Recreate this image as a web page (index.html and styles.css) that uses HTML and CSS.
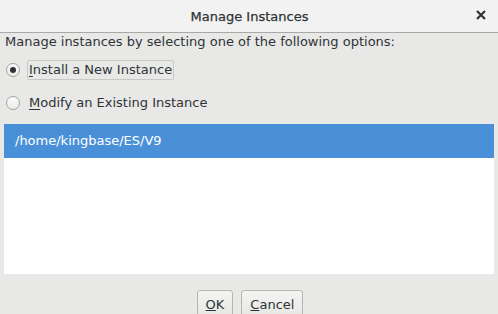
FILE: index.html
```html
<!DOCTYPE html>
<html lang="en">
<head>
  <meta charset="UTF-8" />
  <title>Manage Instances</title>
  <link rel="stylesheet" href="styles.css">
</head>
<body>
  <div class="titlebar">
    <span class="title">Manage Instances</span>
    <span class="close">
      <svg width="10" height="10" viewBox="0 0 10 10"><path d="M1 1 L9 9 M9 1 L1 9" stroke="#2e3436" stroke-width="2.2"/></svg>
    </span>
  </div>

  <div class="content">
    <div class="intro">Manage instances by selecting one of the following options:</div>

    <div class="option">
      <span class="radio checked"></span>
      <span class="label focused"><u>I</u>nstall a New Instance</span>
    </div>
    <div class="option">
      <span class="radio"></span>
      <span class="label"><u>M</u>odify an Existing Instance</span>
    </div>

    <div class="list">
      <div class="row selected">/home/kingbase/ES/V9</div>
    </div>

    <div class="buttons">
      <button class="btn"><u>O</u>K</button>
      <button class="btn"><u>C</u>ancel</button>
    </div>
  </div>
</body>
</html>
```

FILE: styles.css
```css
body {
  margin: 0;
  font-family: "DejaVu Sans", sans-serif;
  font-size: 13px;
  color: #2e3436;
  background: #e8e8e7;
  width: 498px;
  height: 314px;
  overflow: hidden;
}

.titlebar {
  height: 32px;
  background: #f2f2f2;
  border-bottom: 1px solid #a8a8a6;
  display: flex;
  align-items: center;
  justify-content: center;
  position: relative;
}

.title {
  font-size: 13px;
  font-weight: 500;
  color: #2e3436;
  margin-left: 1px;
  margin-top: 1px;
  -webkit-text-stroke: 0.25px #2e3436;
}

.close {
  position: absolute;
  right: 12px;
  top: 10px;
  width: 10px;
  height: 10px;
}

.close svg {
  display: block;
}

.content {
  padding: 0 4px;
}

.intro {
  padding-left: 1px;
  line-height: 18px;
}

.option {
  display: flex;
  align-items: center;
  height: 20px;
  margin-top: 9px;
}

.option + .option {
  margin-top: 13px;
}

.radio {
  box-sizing: border-box;
  width: 14px;
  height: 14px;
  border: 1px solid #a3a3a1;
  border-radius: 50%;
  background: linear-gradient(#fbfbfb, #ebebea);
  margin-left: 2px;
  margin-right: 7px;
  display: flex;
  align-items: center;
  justify-content: center;
}

.radio.checked::after {
  content: "";
  width: 6px;
  height: 6px;
  border-radius: 50%;
  background: #2e3436;
}

.label {
  padding: 1px 1px;
  border: 1px solid transparent;
  border-radius: 2px;
  line-height: 16px;
}

.label.focused {
  border-color: #c8c8c6;
}

.label u {
  text-decoration-thickness: 1px;
  text-underline-offset: 2px;
}

.list {
  margin-top: 11px;
  height: 150px;
  background: #ffffff;
}

.row {
  height: 34px;
  line-height: 34px;
  padding-left: 11px;
}

.row.selected {
  background: #4a90d9;
  color: #ffffff;
}

.buttons {
  display: flex;
  justify-content: center;
  gap: 8px;
  margin-top: 16px;
  padding-left: 2px;
}

.btn {
  font-family: "DejaVu Sans", sans-serif;
  font-size: 13px;
  color: #2e3436;
  height: 28px;
  padding: 0 8px;
  border: 1px solid #b6b6b3;
  border-radius: 3px;
  background: linear-gradient(#f4f4f3, #e6e6e4);
}
```
